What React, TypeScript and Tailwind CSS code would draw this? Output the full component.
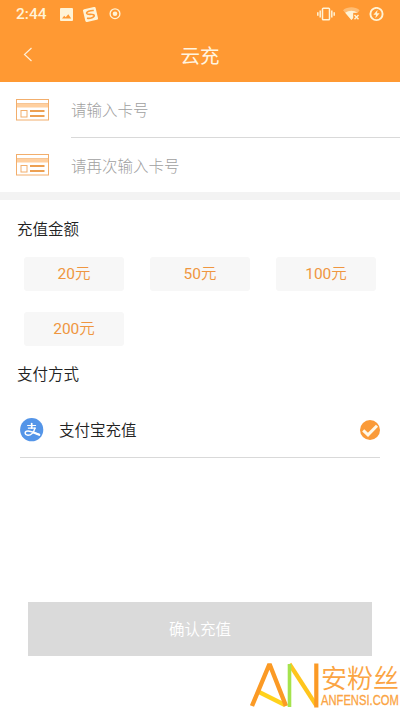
import React, { useState } from 'react';

const amounts = [20, 50, 100, 200];

function StatusBar() {
  return (
    <div className="h-7 pl-4 pr-4 flex items-center justify-between text-[#fff3d6]">
      <div className="flex items-center">
        <span className="w-11 pt-px font-['Roboto'] font-medium text-[15.5px] leading-none">2:44</span>
        <svg className="w-[13px] h-[13px]" viewBox="0 0 13 13">
          <rect width="13" height="13" rx="1" fill="currentColor" />
          <path d="M2 10.5 4.2 7.8 5.7 9.3 8.3 6.3 11.2 10.5Z" fill="#ff9933" />
        </svg>
        <svg className="ml-[10px] w-[15px] h-[15px]" viewBox="0 0 15 15">
          <g transform="rotate(-13 7.5 7.5)">
            <rect x="1" y="1" width="13" height="13" rx="1.5" fill="currentColor" />
            <path d="M11.6 4.3C8 3.2 3.8 3.9 4 5.7 4.2 7.7 11 6.9 10.9 9.2 10.8 11.2 6.5 11.6 3.2 10.4" fill="none" stroke="#ff9933" strokeWidth="1.6" />
          </g>
        </svg>
        <svg className="ml-[11px] w-3 h-3" viewBox="0 0 12 12">
          <circle cx="6" cy="5.7" r="4.9" fill="none" stroke="currentColor" strokeWidth="1.3" />
          <circle cx="6" cy="5.7" r="2.3" fill="currentColor" />
        </svg>
      </div>
      <div className="flex items-center">
        <svg className="w-[18px] h-3.5" viewBox="0 0 18 14" fill="none" stroke="currentColor" strokeWidth="1.5">
          <rect x="5.5" y="1.2" width="7" height="11.6" rx="0.8" />
          <path d="M3.2 3.5v7M.8 5.2v3.6M14.8 3.5v7M17.2 5.2v3.6" />
        </svg>
        <svg className="ml-2 w-[17px] h-3.5" viewBox="0 0 17 14">
          <path d="M0 3.2C4.8-.6 12-.6 16.6 3.2L14.5 6H10V11L8.4 13Z" fill="currentColor" opacity=".4" />
          <path d="M2.2 5.7C5.8 3 11 3 14.4 5.7H10.2V11L8.4 13Z" fill="currentColor" />
          <path d="M11.5 8l4 4.2M15.5 8l-4 4.2" stroke="currentColor" strokeWidth="1.4" />
        </svg>
        <svg className="ml-[9px] w-[15px] h-[15px]" viewBox="0 0 15 15">
          <circle cx="7.5" cy="7" r="6.1" fill="none" stroke="currentColor" strokeWidth="1.9" />
          <path d="M8.6 2.7 4.4 7.8H7L6.4 11.3 10.6 6.2H8Z" fill="currentColor" />
        </svg>
      </div>
    </div>
  );
}

function CardIcon() {
  return (
    <svg className="w-[33px] h-[22px] shrink-0" viewBox="0 0 33 22" fill="none">
      <rect x="1" y="4.5" width="31" height="4" fill="#ffd0a0" />
      <rect x=".5" y=".5" width="32" height="20.5" stroke="#f2ae6c" />
      <path d="M1 4.5h31" stroke="#f7c594" />
      <rect x="5" y="11.5" width="6" height="6.5" stroke="#f2ae6c" />
      <path d="M14 12h14.5M14 17h14.5" stroke="#eda052" strokeWidth="2" />
    </svg>
  );
}

function AlipayIcon() {
  return (
    <svg className="w-6 h-6 shrink-0" viewBox="0 0 24 24" fill="none">
      <circle cx="11.7" cy="11.7" r="11.6" fill="#5495e8" />
      <g stroke="#fff" strokeLinecap="round">
        <path d="M7.6 7.5h8M8.3 10.1h7" strokeWidth="1.1" />
        <path d="M11.7 5.6v4.4" strokeWidth="1.7" />
        <path d="M15 10.1C13.9 13.7 11.2 17.2 8 17.2 4.2 17.2 4.3 13 8 13 11.2 13 14.9 15.2 19.2 16.5" strokeWidth="1.5" />
        <path d="M13.6 14.5 19.2 16.8" strokeWidth="2.2" />
      </g>
    </svg>
  );
}

function Watermark() {
  return (
    <div className="absolute left-[250px] top-[661px] w-[150px] h-[50px] flex pointer-events-none text-[#fba443]">
      <svg className="w-[70px] h-[50px] shrink-0" viewBox="0 0 70 50" fill="none">
        <path d="M9 31 35 44" stroke="#ffd21c" strokeWidth="4.2" />
        <path d="M2 45 19.5 3 36 45" stroke="#fb9a25" strokeWidth="4.4" strokeLinejoin="bevel" />
        <path d="M39.5 3 66 44" stroke="#ffc51d" strokeWidth="4.2" />
        <path d="M39.5 3v43" stroke="#a5e34d" strokeWidth="3.6" />
        <path d="M66.3 2.5v44" stroke="#fb9a25" strokeWidth="4.2" />
      </svg>
      <div className="w-20 pl-px">
        <div className="h-[31px] leading-[31px] text-[26px] font-[350] whitespace-nowrap font-['Noto_Sans_CJK_SC',sans-serif]">安粉丝</div>
        <div className="w-max h-4 leading-4 text-[14px] origin-left scale-x-[0.8] font-['Liberation_Sans',sans-serif] [-webkit-text-stroke:0.3px_#fba443]">ANFENSI.COM</div>
      </div>
    </div>
  );
}

export default function App() {
  const [card, setCard] = useState('');
  const [confirmCard, setConfirmCard] = useState('');

  return (
    <main className="relative w-full h-[711px] overflow-hidden bg-white text-[#222] text-[15.5px] font-[350] font-['Noto_Sans_CJK_SC',sans-serif]">
      <header className="h-[82px] bg-[#ff9933]">
        <StatusBar />
        <div className="relative h-[54px] flex items-center justify-center">
          <button className="absolute left-[23px] top-[19px]">
            <svg className="w-[10px] h-[15px]" viewBox="0 0 10 15" fill="none" stroke="#fff0d8" strokeWidth="1.2">
              <path d="M8.5 1 1.5 7.5l7 6.5" />
            </svg>
          </button>
          <h1 className="text-[19.5px] font-normal leading-none text-[#fff5e2]">云充</h1>
        </div>
      </header>

      <section className="h-[118px] border-b-8 border-[#f3f3f3]">
        <div className="h-14 flex items-center pl-4">
          <CardIcon />
          <input
            value={card}
            onChange={(e) => setCard(e.target.value)}
            placeholder="请输入卡号"
            className="ml-[22px] w-0 flex-1 h-full pb-[2px] border-b border-[#d9d9d9] font-light placeholder:text-[#a0a0a0] focus:outline-none"
          />
        </div>
        <div className="h-[54px] flex items-center pl-4">
          <CardIcon />
          <input
            value={confirmCard}
            onChange={(e) => setConfirmCard(e.target.value)}
            placeholder="请再次输入卡号"
            className="ml-[22px] w-0 flex-1 h-full pb-px font-light placeholder:text-[#a0a0a0] focus:outline-none"
          />
        </div>
      </section>

      <section>
        <h2 className="h-[57px] pl-[17px] flex items-center">充值金额</h2>
        <div className="grid grid-cols-3 gap-x-[26px] gap-y-[21.5px] px-6">
          {amounts.map((n) => (
            <button key={n} className="h-[33.5px] pt-[2px] rounded-[3px] bg-[#f7f7f7] text-[#ef9640] font-['Roboto','Noto_Sans_CJK_SC',sans-serif]">
              <span className="font-normal">{n}</span>元
            </button>
          ))}
        </div>
      </section>

      <section>
        <h2 className="h-[57px] pl-[17px] flex items-center">支付方式</h2>
        <div className="mx-5 h-[55.5px] flex items-center border-b border-[#d9d9d9]">
          <AlipayIcon />
          <span className="ml-[15px] flex-1">支付宝充值</span>
          <svg className="w-5 h-5" viewBox="0 0 20 20" fill="none">
            <circle cx="10" cy="10" r="10" fill="#fa9a38" />
            <path d="M3.2 10.3 8 14.9 17 5.8" stroke="#fff8e8" strokeWidth="3" />
          </svg>
        </div>
      </section>

      <button disabled className="mt-36 mx-7 w-[344px] h-[53.5px] bg-[#dadada] text-white">
        确认充值
      </button>

      <Watermark />
    </main>
  );
}
